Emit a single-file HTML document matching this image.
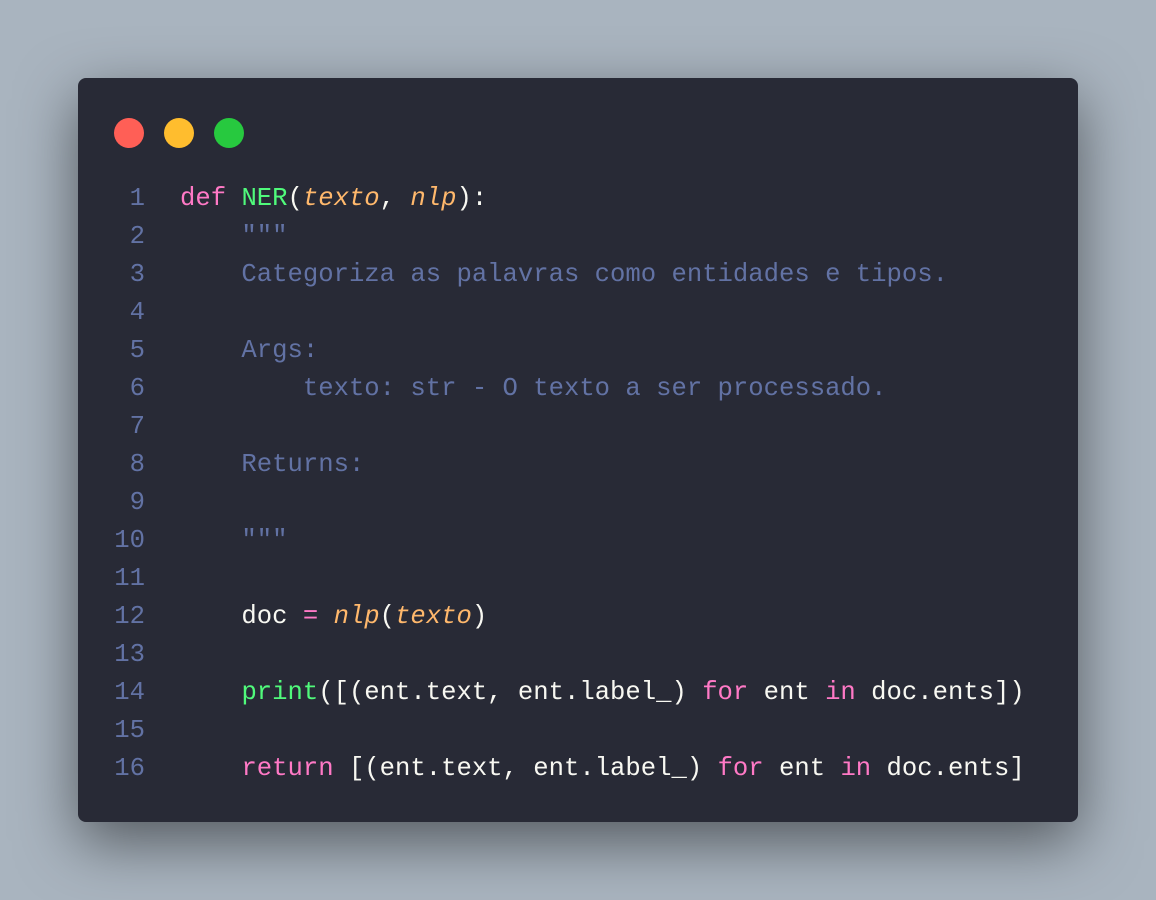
<!DOCTYPE html>
<html><head><meta charset="utf-8"><style>
html,body{margin:0;padding:0;}
body{width:1156px;height:900px;background:#a9b4bf;position:relative;overflow:hidden;}
.win{position:absolute;left:78px;top:78px;width:1000px;height:744px;background:#282a36;border-radius:8px;box-shadow:0 20px 60px rgba(0,0,0,0.5);}
.dot{position:absolute;top:40px;width:30px;height:30px;border-radius:50%;}
pre{position:absolute;left:0;top:102px;margin:0;font-family:"Liberation Mono","DejaVu Sans Mono",monospace;font-size:25.6px;line-height:38px;color:#f8f8f2;}
.ln{display:inline-block;width:67px;text-align:right;color:#6272a4;margin-right:35px;}
.k{color:#ff79c6}.f{color:#50fa7b}.p{color:#ffb86c;font-style:italic}.c{color:#6272a4}
</style></head><body>
<div class="win">
<div class="dot" style="left:36px;background:#ff5f56"></div>
<div class="dot" style="left:86px;background:#ffbd2e"></div>
<div class="dot" style="left:136px;background:#27c93f"></div>
<pre><span class="ln">1</span><span class="k">def</span> <span class="f">NER</span>(<span class="p">texto</span>, <span class="p">nlp</span>):
<span class="ln">2</span><span class="c">    """</span>
<span class="ln">3</span><span class="c">    Categoriza as palavras como entidades e tipos.</span>
<span class="ln">4</span>
<span class="ln">5</span><span class="c">    Args:</span>
<span class="ln">6</span><span class="c">        texto: str - O texto a ser processado.</span>
<span class="ln">7</span>
<span class="ln">8</span><span class="c">    Returns:</span>
<span class="ln">9</span>
<span class="ln">10</span><span class="c">    """</span>
<span class="ln">11</span>
<span class="ln">12</span>    doc <span class="k">=</span> <span class="p">nlp</span>(<span class="p">texto</span>)
<span class="ln">13</span>
<span class="ln">14</span>    <span class="f">print</span>([(ent.text, ent.label_) <span class="k">for</span> ent <span class="k">in</span> doc.ents])
<span class="ln">15</span>
<span class="ln">16</span>    <span class="k">return</span> [(ent.text, ent.label_) <span class="k">for</span> ent <span class="k">in</span> doc.ents]</pre>
</div>
</body></html>
